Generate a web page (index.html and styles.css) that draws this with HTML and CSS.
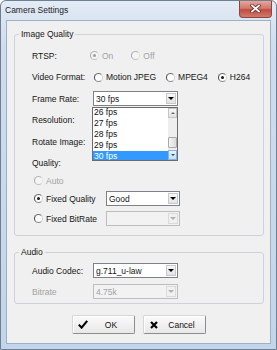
FILE: index.html
```html
<!DOCTYPE html>
<html>
<head>
<meta charset="utf-8">
<title>Camera Settings</title>
<link rel="stylesheet" href="styles.css">
</head>
<body>
<div class="window">
  <div class="titlebar">
    <span class="title">Camera Settings</span>
    <div class="close">
      <svg width="11" height="9" viewBox="0 0 11 9"><path d="M2 1.5 L9 7.5 M9 1.5 L2 7.5" stroke="#6b2a25" stroke-width="3.4" stroke-linecap="square"/><path d="M2 1.5 L9 7.5 M9 1.5 L2 7.5" stroke="#fff" stroke-width="1.8" stroke-linecap="square"/></svg>
    </div>
  </div>
  <div class="client">
    <fieldset class="group">
      <legend>Image Quality</legend>
      <div class="gbody gbody-image">
        <div class="row r-rtsp">
          <span class="label">RTSP:</span>
          <span class="opt dis o-on"><span class="radio on"></span>On</span>
          <span class="opt dis o-off"><span class="radio"></span>Off</span>
        </div>
        <div class="row r-video">
          <span class="label">Video Format:</span>
          <span class="opt o-mjpeg"><span class="radio"></span>Motion JPEG</span>
          <span class="opt o-next"><span class="radio"></span>MPEG4</span>
          <span class="opt o-next"><span class="radio on"></span>H264</span>
        </div>
        <div class="row r-frame">
          <span class="label">Frame Rate:</span>
          <div class="combo-wrap">
            <div class="combo"><span class="val">30 fps</span><span class="arr"></span></div>
            <div class="dropdown">
              <div class="list">
                <div class="items">
                  <div class="item">26 fps</div>
                  <div class="item">27 fps</div>
                  <div class="item">28 fps</div>
                  <div class="item">29 fps</div>
                  <div class="item sel">30 fps</div>
                </div>
              </div>
              <div class="sb">
                <div class="sb-btn up"></div>
                <div class="sb-track"><div class="sb-thumb"></div></div>
                <div class="sb-btn down"></div>
              </div>
            </div>
          </div>
        </div>
        <div class="row r-res">
          <span class="label">Resolution:</span>
          <div class="combo"><span class="val"></span><span class="arr"></span></div>
        </div>
        <div class="row r-rot">
          <span class="label">Rotate Image:</span>
          <div class="combo"><span class="val"></span><span class="arr"></span></div>
        </div>
        <div class="row r-quality">
          <span class="label">Quality:</span>
        </div>
        <div class="row r-auto">
          <span class="opt dis qopt"><span class="radio"></span>Auto</span>
        </div>
        <div class="row r-fq">
          <span class="opt qopt"><span class="radio on"></span>Fixed Quality</span>
          <div class="combo small"><span class="val">Good</span><span class="arr"></span></div>
        </div>
        <div class="row r-fbr">
          <span class="opt qopt"><span class="radio"></span>Fixed BitRate</span>
          <div class="combo small disabled"><span class="val"></span><span class="arr"></span></div>
        </div>
      </div>
    </fieldset>
    <fieldset class="group group-audio">
      <legend>Audio</legend>
      <div class="gbody gbody-audio">
        <div class="row r-codec">
          <span class="label">Audio Codec:</span>
          <div class="combo"><span class="val">g.711_u-law</span><span class="arr"></span></div>
        </div>
        <div class="row r-bitrate">
          <span class="label dis">Bitrate</span>
          <div class="combo disabled"><span class="val">4.75k</span><span class="arr"></span></div>
        </div>
      </div>
    </fieldset>
    <div class="buttons">
      <div class="btn btn-ok">
        <svg class="ico" width="10" height="9" viewBox="0 0 10 9"><path d="M0.8 4.6 L3.6 7.6 L9.2 0.8" fill="none" stroke="#000" stroke-width="2.1"/></svg>
        <span class="txt">OK</span>
      </div>
      <div class="btn btn-cancel">
        <svg class="ico" width="8" height="8" viewBox="0 0 8 8"><path d="M1 1 L7 7 M7 1 L1 7" stroke="#000" stroke-width="2.2"/></svg>
        <span class="txt">Cancel</span>
      </div>
    </div>
  </div>
</div>
</body>
</html>
```

FILE: styles.css
```css
* { box-sizing: border-box; }
html, body { margin: 0; padding: 0; }
body {
  width: 277px;
  height: 350px;
  overflow: hidden;
  background: #fff;
  font-family: "Liberation Sans", Arial, sans-serif;
  font-size: 8.5px;
  color: #151515;
}
.window {
  width: 277px;
  height: 350px;
  border: 1px solid #6f7f92;
  border-radius: 6px 6px 0 0;
  background: linear-gradient(#e3ebf5, #cfddee 45px, #c3d5ea);
  display: flex;
  flex-direction: column;
}
.titlebar {
  height: 19px;
  flex: none;
  display: flex;
  align-items: flex-start;
  padding-left: 4px;
}
.title { line-height: 19px; color: #1c1c1c; }
.close {
  margin-left: auto;
  margin-right: 4px;
  width: 33px;
  height: 17px;
  border: 1px solid #8c4640;
  border-top: 0;
  border-radius: 0 0 4px 4px;
  background: linear-gradient(#e6a69c, #d4786c 45%, #c24b40 55%, #d17a6c);
  display: flex;
  align-items: center;
  justify-content: center;
  padding-bottom: 2px;
}
.client {
  flex: 1;
  margin: 0 5px 5px 5px;
  border: 1px solid #9eb0c4;
  background: #f0f0f0;
  padding: 7px 6px 9px 7px;
  display: flex;
  flex-direction: column;
}
.group {
  margin: 0;
  padding: 0;
  border: 1px solid #cdd3d9;
  border-radius: 3px;
  min-width: 0;
}
.group legend {
  margin-left: 4px;
  padding: 0 2px;
  line-height: 12px;
  height: 12px;
}
.group-audio { margin-top: 10px; }
.gbody { padding-left: 17px; }
.gbody-image { padding-top: 5px; padding-bottom: 6px; }
.gbody-audio { padding-top: 2px; padding-bottom: 1px; }

.row { display: flex; align-items: center; height: 22px; }
.r-rtsp { height: 21px; }
.r-video { height: 22px; }
.r-frame { height: 21px; }
.r-res { height: 22px; }
.r-rot { height: 22px; }
.r-quality { height: 19px; }
.r-auto { height: 17px; }
.r-fq { height: 19px; }
.r-fbr { height: 21px; }
.r-codec { height: 21px; }
.r-bitrate { height: 21px; }

.label { width: 61px; flex: none; white-space: nowrap; }
.dis { color: #a2a2a2; }

.opt { display: flex; align-items: center; white-space: nowrap; }
.o-on { margin-left: -3px; }
.o-off { margin-left: 18px; }
.o-mjpeg { margin-left: 1px; }
.o-next { margin-left: 10px; }
.qopt { width: 72px; margin-left: 2px; flex: none; }

.radio {
  width: 9px;
  height: 9px;
  flex: none;
  border-radius: 50%;
  border: 1px solid;
  border-color: #6f6f6f #d2d2d2 #8a8a8a #4a4a4a;
  background: #fdfdfd;
  margin-right: 3px;
  display: flex;
  align-items: center;
  justify-content: center;
}
.radio.on::after {
  content: "";
  width: 3px;
  height: 3px;
  border-radius: 50%;
  background: #1a1a1a;
}
.dis .radio {
  border-color: #b4b4b4 #e2e2e2 #c2c2c2 #a8a8a8;
  background: #f5f5f5;
}
.dis .radio.on::after { background: #9c9c9c; }

.combo-wrap { position: relative; width: 85px; flex: none; }
.combo {
  width: 85px;
  height: 15px;
  flex: none;
  display: flex;
  align-items: center;
  border: 1px solid #7c828c;
  background: #fff;
  padding: 0 1px 0 2px;
}
.combo.small { width: 74px; }
.combo .val { flex: 1; white-space: nowrap; overflow: hidden; }
.combo .arr {
  width: 10px;
  height: 11px;
  flex: none;
  border: 1px solid #c9c9c9;
  background: linear-gradient(#f7f7f7, #e2e2e2);
  display: flex;
  align-items: center;
  justify-content: center;
}
.combo .arr::before {
  content: "";
  border-left: 3px solid transparent;
  border-right: 3px solid transparent;
  border-top: 3px solid #000;
}
.combo.disabled { border-color: #bdbdbd; background: #f2f2f2; color: #a2a2a2; }
.combo.disabled .arr { border-color: #dadada; background: #f0f0f0; }
.combo.disabled .arr::before { border-top-color: #b0b0b0; }

.dropdown {
  position: absolute;
  left: -1px;
  top: 16px;
  width: 86px;
  height: 54px;
  border: 1px solid #6c6c6c;
  background: #fff;
  display: flex;
  z-index: 5;
}
.list { flex: 1; overflow: hidden; }
.items { margin-top: -1px; }
.item { height: 11px; line-height: 11px; padding-left: 1px; color: #111; white-space: nowrap; }
.item.sel { background: #3399ff; color: #fff; }
.sb { width: 9px; flex: none; display: flex; flex-direction: column; background: #eeeeee; }
.sb-btn {
  height: 10px;
  flex: none;
  display: flex;
  align-items: center;
  justify-content: center;
  border: 1px solid #c4c4c4;
  background: linear-gradient(#f6f6f6, #e3e3e3);
}
.sb-btn.up::before {
  content: "";
  border-left: 2px solid transparent;
  border-right: 2px solid transparent;
  border-bottom: 2px solid #6a6a6a;
}
.sb-btn.down {
  border-color: #86b3e0;
  background: linear-gradient(#e6f1fc, #c6dff6);
}
.sb-btn.down::before {
  content: "";
  border-left: 2px solid transparent;
  border-right: 2px solid transparent;
  border-top: 2px solid #2c4f72;
}
.sb-track { flex: 1; }
.sb-thumb {
  margin-top: 19px;
  height: 11px;
  border: 1px solid #a9a9a9;
  border-radius: 1px;
  background: linear-gradient(to right, #f4f4f4, #dcdcdc);
}

.buttons {
  display: flex;
  justify-content: center;
  gap: 8px;
  margin-top: 11px;
}
.btn {
  width: 63px;
  height: 19px;
  display: flex;
  align-items: center;
  padding-left: 5px;
  border: 1px solid;
  border-color: #d6d6d6 #8d8d8d #8d8d8d #d6d6d6;
  border-radius: 2px;
  background: linear-gradient(#fafafa, #e8e8e8);
  box-shadow: inset 1px 1px 0 #ffffff;
}
.btn-cancel { padding-left: 6px; }
.btn .ico { flex: none; }
.btn .txt { flex: 1; text-align: center; color: #111; }
```
